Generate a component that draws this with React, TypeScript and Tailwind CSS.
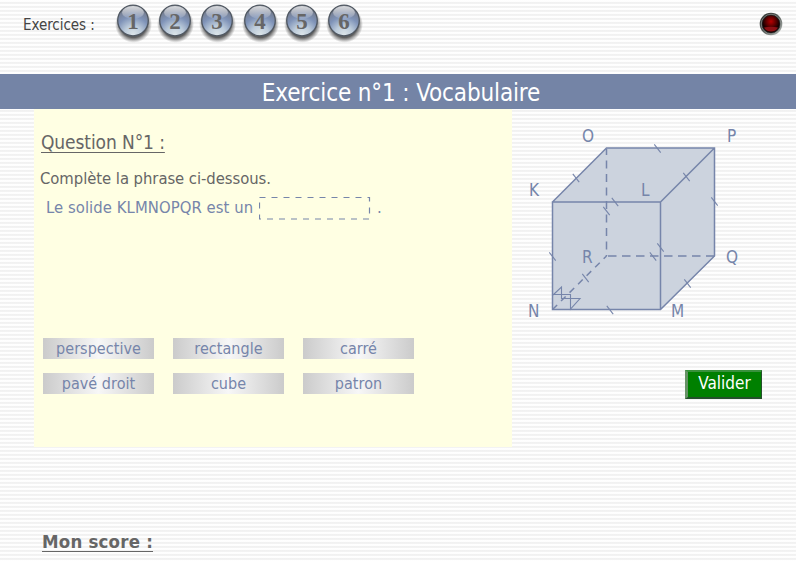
const exercises = [1, 2, 3, 4, 5, 6];
const words = ['perspective', 'rectangle', 'carré', 'pavé droit', 'cube', 'patron'];

function ExerciseButton({ n }: { n: number }) {
  return (
    <button className="h-[42px] w-[36px] shrink-0">
      <svg width="36" height="42" viewBox="0 0 36 42" className="block overflow-visible">
        <defs>
          <radialGradient id={`ball${n}`} cx="0.5" cy="0.95" r="0.95">
            <stop offset="0" stopColor="#dbe4e8" />
            <stop offset="0.3" stopColor="#bccbda" />
            <stop offset="0.6" stopColor="#7f93b8" />
            <stop offset="0.8" stopColor="#78839a" />
            <stop offset="1" stopColor="#686d76" />
          </radialGradient>
          <linearGradient id={`gloss${n}`} x1="0" y1="0" x2="0" y2="1">
            <stop offset="0" stopColor="#fff" stopOpacity="0.75" />
            <stop offset="1" stopColor="#fff" stopOpacity="0.08" />
          </linearGradient>
          <radialGradient id={`shadow${n}`}>
            <stop offset="0.72" stopColor="#444" stopOpacity="0.85" />
            <stop offset="1" stopColor="#666" stopOpacity="0" />
          </radialGradient>
        </defs>
        <ellipse cx="18.5" cy="24.3" rx="18.5" ry="18.5" fill={`url(#shadow${n})`} />
        <circle cx="18" cy="20.5" r="15.3" fill={`url(#ball${n})`} stroke="#505862" strokeWidth="1.3" />
        <ellipse cx="18" cy="12.5" rx="11" ry="6.5" fill={`url(#gloss${n})`} />
        <text x="18" y="28.5" textAnchor="middle" fontSize="23" fontWeight="700" fill="#666" className="font-['Liberation_Serif',serif]">{n}</text>
      </svg>
    </button>
  );
}

const ticks = [
  [657.5, 148.5], [576, 178], [686.5, 177], [714.5, 201.5], [615, 202],
  [606.5, 211], [660.5, 247.5], [653, 256.5], [552.5, 256.5], [585.5, 278], [687.5, 283.5], [610, 310],
];
const labels: [string, number, number][] = [
  ['O', 582, 142], ['P', 727, 142], ['K', 529, 196], ['L', 641, 196],
  ['R', 582, 263], ['Q', 726, 263], ['N', 528, 317], ['M', 671, 317],
];

function Cube() {
  return (
    <svg width="230" height="210" viewBox="520 120 230 210" className="block">
      <path d="M606.5 148L714.5 148L714.5 256L660.5 309.5L552.5 309.5L552.5 202Z" fill="#ccd3de" />
      <g fill="none" stroke="#7685aa" strokeWidth="1.5">
        <path d="M552.5 202L606.5 148H714.5V256L660.5 309.5H552.5V202H660.5L714.5 148M660.5 202V309.5" />
        <path d="M606.5 149V256" strokeDasharray="8 5.5" strokeDashoffset="2" />
        <path d="M714.5 256H606.5" strokeDasharray="8.5 5.5" />
        <path d="M552.5 309.5L606.5 256" strokeDasharray="6.5 5.5" />
        <g strokeWidth="1.1">
          {ticks.map(([x, y]) => <path key={`${x}-${y}`} d={`M${x - 3.2} ${y - 4.2}l6.4 8.4`} />)}
          <path d="M553 294.5H570.5V309L580 298.5H561.5V287L553 295" />
        </g>
      </g>
      <g fill="#7685aa" fontSize="17">
        {labels.map(([s, x, y]) => <text key={s} x={x} y={y}>{s}</text>)}
      </g>
    </svg>
  );
}

export default function App() {
  return (
    <div className="flex h-[561px] w-[796px] flex-col overflow-hidden bg-[repeating-linear-gradient(to_bottom,#fff_0px,#fdfdfd_2px,#f1f1f1_2px,#f4f4f4_4px)] font-['DejaVu_Sans_Condensed','DejaVu_Sans',sans-serif] [font-stretch:condensed] text-[#666]">
      <header className="flex h-[74px] shrink-0 items-start pl-[23px] pr-[13px]">
        <span className="mt-[15px] w-[92px] whitespace-nowrap text-[15px] leading-5 tracking-[-0.06px] text-[#444]">Exercices :</span>
        <nav className="flex gap-[6.2px]">
          {exercises.map((n) => <ExerciseButton key={n} n={n} />)}
        </nav>
        <svg width="24" height="24" viewBox="0 0 24 24" className="ml-auto mt-3">
          <defs>
            <linearGradient id="rim" x1="0" y1="0" x2="1" y2="1">
              <stop stopColor="#292d2b" /><stop offset="0.5" stopColor="#555b58" /><stop offset="1" stopColor="#bfc5c1" />
            </linearGradient>
            <radialGradient id="lamp" cx="0.5" cy="0.35">
              <stop stopColor="#b80000" /><stop offset="0.55" stopColor="#600000" /><stop offset="1" stopColor="#160000" />
            </radialGradient>
          </defs>
          <circle cx="12" cy="12" r="11.3" fill="url(#rim)" />
          <circle cx="12" cy="12" r="9.7" fill="#202020" stroke="#a5aaa6" strokeWidth="0.6" />
          <circle cx="12" cy="12" r="8.5" fill="url(#lamp)" />
          <path d="M5 15.5Q12 14 19 15.5Q17 19.5 12 19.5Q7 19.5 5 15.5Z" fill="#8c1014" />
        </svg>
      </header>
      <h1 className="flex h-[35px] shrink-0 items-center justify-center bg-[#7484a6] pl-[6px] pt-[2px] text-[24px] leading-none tracking-[-0.13px] text-white">Exercice n°1 : Vocabulaire</h1>
      <div className="flex h-[338px] shrink-0">
        <main className="ml-[34px] w-[478px] bg-[#ffffe3] pt-[21px]">
          <h2 className="ml-[7px] h-[34px] w-fit whitespace-nowrap text-[19px] leading-6 tracking-[-0.1px] underline decoration-1 underline-offset-[3px]">Question N°1 :</h2>
          <p className="ml-[6px] mt-[4px] text-[16.5px] leading-[22px] tracking-[-0.05px]">Complète la phrase ci-dessous.</p>
          <p className="ml-[12px] mt-[6px] flex h-[24px] text-[16.5px] leading-6 text-[#7685aa]">
            <span className="w-[213px] whitespace-nowrap tracking-[0.06px]">Le solide KLMNOPQR est un</span>
            <svg width="112" height="23" viewBox="0 0 112 23" className="mt-px shrink-0">
              <path d="M.5 .5H110.5V22H.5Z" fill="none" stroke="#7685aa" strokeWidth="1.2" strokeDasharray="6 6" />
            </svg>
            <span className="ml-[6px]">.</span>
          </p>
          <div className="ml-[9px] mt-[118px] grid w-fit grid-cols-3 gap-x-5 gap-y-[14px]">
            {words.map((w) => <button key={w} className="h-[21px] w-[111px] whitespace-nowrap bg-[linear-gradient(to_right,#cbcbcb,#f7f7f7_50%,#cbcbcb)] -mr-px text-[16px] leading-[20px] text-[#7685aa]"><span className="tracking-[0.05px]">{w}</span></button>)}
          </div>
        </main>
        <aside className="flex flex-1 flex-col">
          <div className="ml-[8px] mt-[11px]"><Cube /></div>
          <button className="ml-[173px] mt-[40px] h-[29px] w-[77px] border-y-2 border-l-[3px] border-r border-b-[#24502b] border-l-[#669266] border-r-[#24502b] border-t-[#39913d] bg-[#008000] text-[17px] leading-[23px] text-white"><span className="relative -top-px">Valider</span></button>
        </aside>
      </div>
      <footer className="pl-[42px] pt-[83px]">
        <h2 className="w-fit whitespace-nowrap text-[18.5px] leading-6 font-bold tracking-[0.2px] underline decoration-1 underline-offset-[3px]">Mon score :</h2>
      </footer>
    </div>
  );
}
